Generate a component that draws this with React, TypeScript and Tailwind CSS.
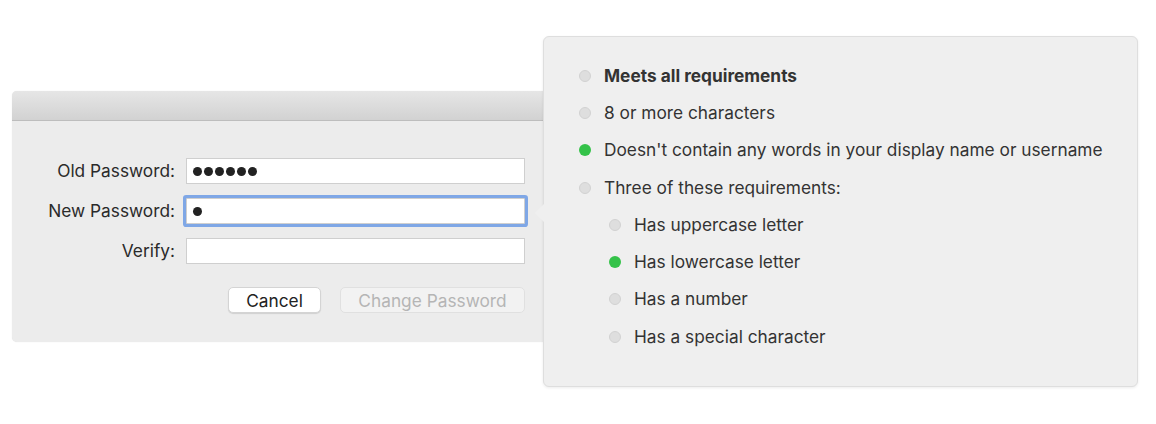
import React from "react";

const font = { fontFamily: "Inter, 'Noto Sans', sans-serif" };

function Dot({ on }: { on?: boolean }) {
  return on ? (
    <span className="inline-block w-[12px] h-[12px] rounded-full bg-[#34c249] shrink-0" />
  ) : (
    <span className="inline-block w-[12px] h-[12px] rounded-full bg-[#dedede] border border-[#d2d2d2] shrink-0" />
  );
}

function Req({ on, text, bold, sub }: { on?: boolean; text: string; bold?: boolean; sub?: boolean }) {
  return (
    <div className={`flex items-center h-[37.3px] ${sub ? "pl-[65px]" : "pl-[35px]"}`}>
      <Dot on={on} />
      <span className={`ml-[13px] text-[17.3px] text-[#333333] ${bold ? "font-bold" : ""}`}>{text}</span>
    </div>
  );
}

function Row({ label, children }: { label: string; children: React.ReactNode }) {
  return (
    <div className="flex items-center h-[26px]">
      <div className="w-[174px] pr-[11px] text-right text-[17.3px] text-[#2a2a2a]">{label}</div>
      {children}
    </div>
  );
}

function Dots({ n }: { n: number }) {
  return (
    <div className="flex gap-[2px] pl-[6px]">
      {Array.from({ length: n }).map((_, i) => (
        <span key={i} className="inline-block w-[9px] h-[9px] rounded-full bg-[#222]" />
      ))}
    </div>
  );
}

export default function App() {
  return (
    <div className="relative w-[1156px] h-[424px] bg-white overflow-hidden" style={font}>
      {/* dialog */}
      <div className="absolute left-[12px] top-[91px] w-[560px] h-[251px] rounded-[5px] bg-[#ececec] shadow-[0_0_1px_rgba(0,0,0,0.15)] overflow-hidden">
        <div className="h-[30px] bg-gradient-to-b from-[#e6e6e6] to-[#d2d2d2] border-b border-[#bdbdbd]" />
        <div className="pt-[37px] flex flex-col gap-[14px] w-[513px]">
          <Row label="Old Password:">
            <div className="w-[339px] h-[26px] bg-white border border-[#cfcfcf] flex items-center">
              <Dots n={6} />
            </div>
          </Row>
          <Row label="New Password:">
            <div className="w-[339px] h-[26px] bg-white border border-[#cfcfcf] flex items-center shadow-[0_0_0_3px_#7fa7e6] rounded-[1px]">
              <Dots n={1} />
            </div>
          </Row>
          <Row label="Verify:">
            <div className="w-[339px] h-[26px] bg-white border border-[#cfcfcf]" />
          </Row>
          <div className="flex justify-end gap-[19px] mt-[9px]">
            <button className="w-[93px] h-[26px] rounded-[5px] bg-white border border-[#d4d4d4] shadow-[0_1px_1px_rgba(0,0,0,0.12)] text-[17.3px] text-[#222]">
              Cancel
            </button>
            <button className="w-[185px] h-[26px] rounded-[5px] bg-[#f2f2f2] border border-[#e0e0e0] text-[17.3px] text-[#b5b5b5]">
              Change Password
            </button>
          </div>
        </div>
      </div>

      {/* popover */}
      <div className="absolute left-[543px] top-[36px] w-[595px] h-[351px] rounded-[6px] bg-[#efefef] border border-[#dedede] shadow-[0_1px_3px_rgba(0,0,0,0.08)]">
        <div className="absolute left-[-9px] top-[167px] w-0 h-0 border-y-[9px] border-y-transparent border-r-[9px] border-r-[#efefef]" />
        <div className="pt-[20px]">
          <Req text="Meets all requirements" bold />
          <Req text="8 or more characters" />
          <Req on text="Doesn't contain any words in your display name or username" />
          <Req text="Three of these requirements:" />
          <Req sub text="Has uppercase letter" />
          <Req sub on text="Has lowercase letter" />
          <Req sub text="Has a number" />
          <Req sub text="Has a special character" />
        </div>
      </div>
    </div>
  );
}
